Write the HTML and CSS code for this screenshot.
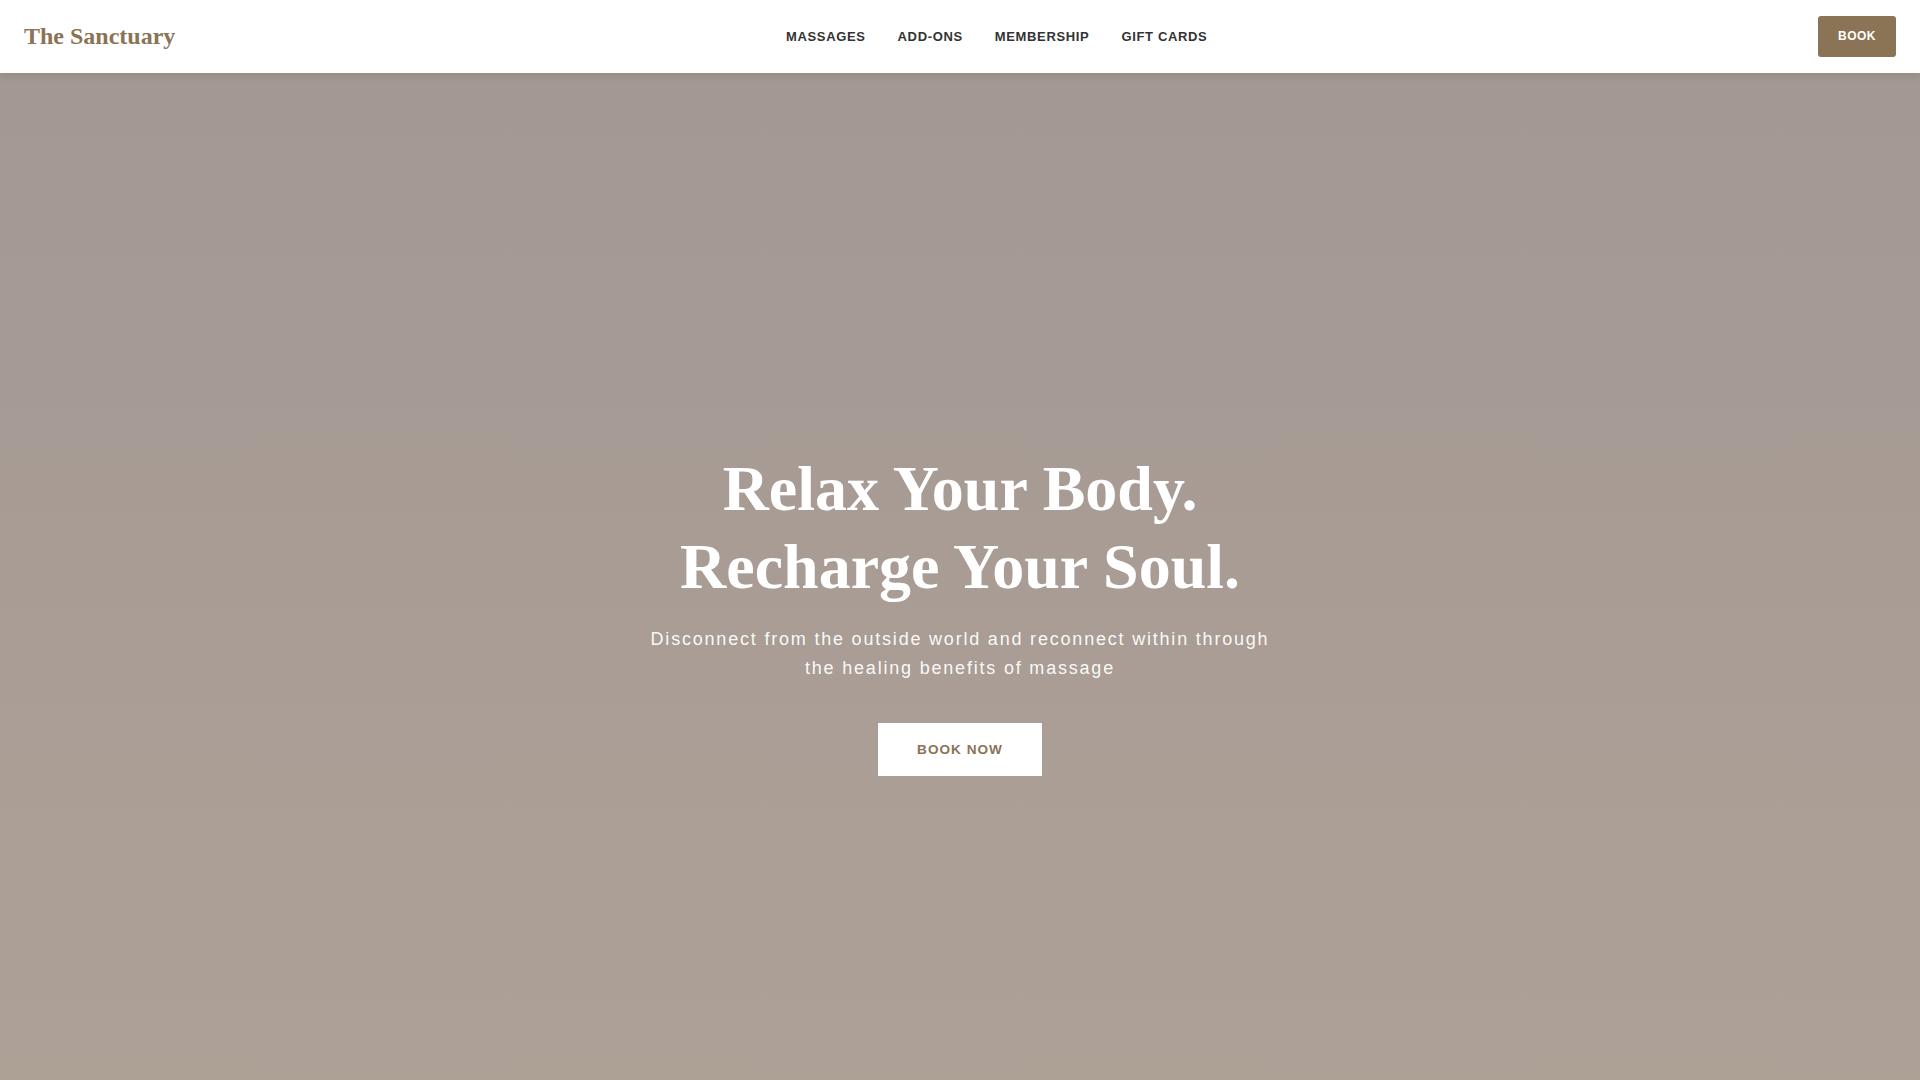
FILE: index.html
```html
<!DOCTYPE html>
<html lang="en">
<head>
<meta charset="utf-8">
<title>The Sanctuary</title>
<link rel="stylesheet" href="styles.css">
</head>
<body>
<header class="site-header">
  <a class="logo" href="#">The Sanctuary</a>
  <nav class="main-nav">
    <a href="#">MASSAGES</a>
    <a href="#">ADD-ONS</a>
    <a href="#">MEMBERSHIP</a>
    <a href="#">GIFT CARDS</a>
  </nav>
  <a class="book-btn" href="#">BOOK</a>
</header>
<main>
  <section class="hero">
    <div class="hero-content">
      <h1 class="hero-title">Relax Your Body.<br>Recharge Your Soul.</h1>
      <p class="hero-sub">Disconnect from the outside world and reconnect within through the healing benefits of massage</p>
      <a class="hero-btn" href="#">BOOK NOW</a>
    </div>
  </section>
</main>
</body>
</html>
```
FILE: styles.css
```css
* { box-sizing: border-box; }
html, body { margin: 0; padding: 0; }
body {
  font-family: "Liberation Sans", Arial, sans-serif;
  background: #aca096;
  overflow: hidden;
}
a { text-decoration: none; }

.site-header {
  position: relative;
  z-index: 2;
  height: 73px;
  padding: 16px 24px;
  display: flex;
  align-items: center;
  justify-content: space-between;
  background: #ffffff;
  box-shadow: 0 2px 8px rgba(0, 0, 0, 0.12);
}
.logo {
  font-family: "Liberation Serif", "Times New Roman", serif;
  font-weight: 700;
  font-size: 24px;
  color: #8b7355;
}
.main-nav {
  display: flex;
  gap: 32px;
  margin-top: -1px;
}
.main-nav a {
  font-size: 13px;
  font-weight: 700;
  letter-spacing: 0.65px;
  color: #333333;
}
.book-btn {
  display: block;
  background: #8b7355;
  color: #ffffff;
  font-size: 12px;
  font-weight: 700;
  letter-spacing: 0.5px;
  line-height: 17px;
  padding: 12px 20px;
  border-radius: 3px;
}

.hero {
  min-height: 100vh;
  display: flex;
  align-items: center;
  justify-content: center;
  background: linear-gradient(180deg, #a39893 0%, #a89c95 45%, #aea297 100%);
  text-align: center;
  color: #ffffff;
}
.hero-content {
  display: flex;
  flex-direction: column;
  align-items: center;
}
.hero-title {
  margin: 0 0 19px;
  font-family: "Liberation Serif", "Times New Roman", serif;
  font-weight: 700;
  font-size: 64px;
  line-height: 78px;
}
.hero-sub {
  margin: 0 0 41px;
  max-width: 640px;
  font-size: 18px;
  line-height: 28.8px;
  letter-spacing: 1.8px;
  color: rgba(255, 255, 255, 0.96);
}
.hero-btn {
  display: block;
  background: #ffffff;
  color: #8b7355;
  font-size: 13.6px;
  font-weight: 700;
  letter-spacing: 1px;
  line-height: 17px;
  padding: 18px 39px;
}
```
